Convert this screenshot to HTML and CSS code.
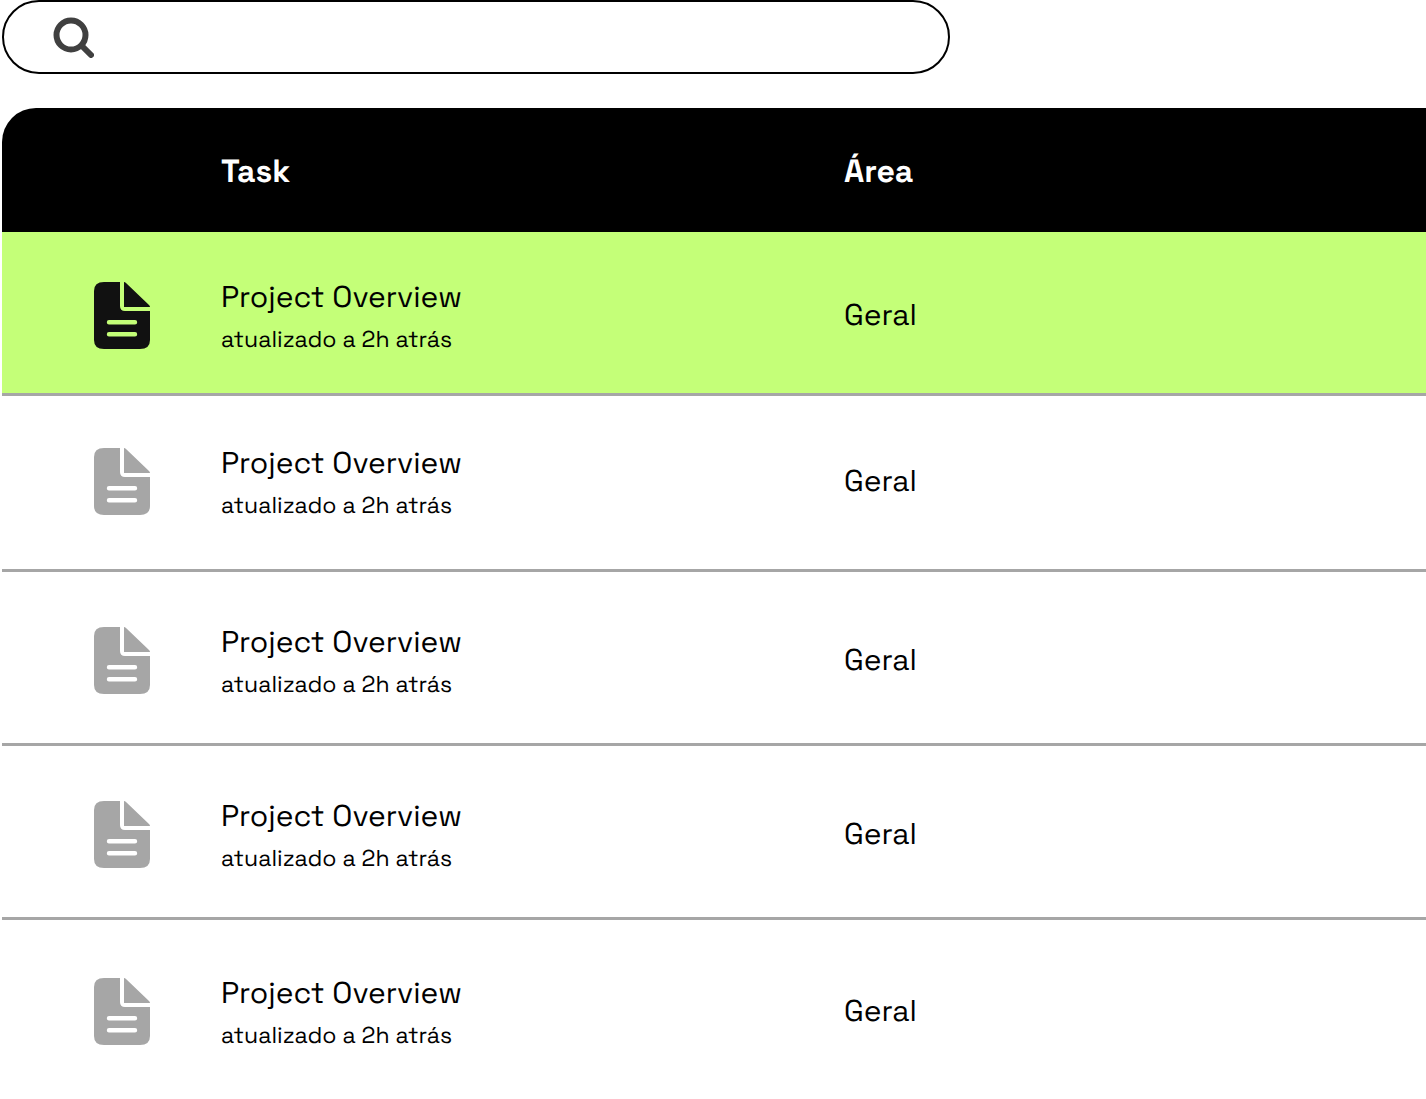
FILE: index.html
```html
<!DOCTYPE html>
<html lang="pt-BR">
<head>
<meta charset="utf-8">
<meta name="viewport" content="width=device-width, initial-scale=1">
<title>Tasks</title>
<link rel="stylesheet" href="styles.css">
</head>
<body>
<svg class="sprite" aria-hidden="true">
  <symbol id="doc" viewBox="0 0 56 68">
    <path fill-rule="evenodd" d="M10 0H26V24Q26 29 31 29H56V58Q56 67 46 67H10Q0 67 0 58V9Q0 0 10 0ZM15 38a2 2 0 0 0 0 4.400H41a2 2 0 0 0 0-4.400ZM15 50a2 2 0 0 0 0 4.400H41a2 2 0 0 0 0-4.400Z"/>
    <path d="M30 0Q31 0 32 1L55 23Q56 24 56 25H30Z"/>
  </symbol>
</svg>
<main class="page">
  <form class="search" role="search">
    <svg class="search-icon" viewBox="0 0 42 42" aria-hidden="true">
      <circle cx="19" cy="19" r="14.500"/>
      <path d="M30 30L39 39"/>
    </svg>
    <input class="search-input" type="search" aria-label="Buscar">
  </form>
  <table class="tasks">
    <colgroup><col class="col-icon"><col class="col-task"><col></colgroup>
    <thead>
      <tr><td></td><th scope="col">Task</th><th scope="col">Área</th></tr>
    </thead>
    <tbody>
      <tr class="selected">
        <td><svg class="doc" aria-hidden="true"><use href="#doc"/></svg></td>
        <td><div class="title">Project Overview</div><div class="updated">atualizado a 2h atrás</div></td>
        <td><div class="area">Geral</div></td>
      </tr>
      <tr>
        <td><svg class="doc" aria-hidden="true"><use href="#doc"/></svg></td>
        <td><div class="title">Project Overview</div><div class="updated">atualizado a 2h atrás</div></td>
        <td><div class="area">Geral</div></td>
      </tr>
      <tr>
        <td><svg class="doc" aria-hidden="true"><use href="#doc"/></svg></td>
        <td><div class="title">Project Overview</div><div class="updated">atualizado a 2h atrás</div></td>
        <td><div class="area">Geral</div></td>
      </tr>
      <tr>
        <td><svg class="doc" aria-hidden="true"><use href="#doc"/></svg></td>
        <td><div class="title">Project Overview</div><div class="updated">atualizado a 2h atrás</div></td>
        <td><div class="area">Geral</div></td>
      </tr>
      <tr>
        <td><svg class="doc" aria-hidden="true"><use href="#doc"/></svg></td>
        <td><div class="title">Project Overview</div><div class="updated">atualizado a 2h atrás</div></td>
        <td><div class="area">Geral</div></td>
      </tr>
    </tbody>
  </table>
</main>
</body>
</html>
```
FILE: styles.css
```css
* { box-sizing: border-box; }
body {
  margin: 0;
  background: #fff;
  color: #000;
  font-family: "Space Grotesk", Inter, sans-serif;
  font-size: 30px;
  text-rendering: geometricPrecision;
}
.sprite { display: none; }
.page {
  display: flex;
  flex-direction: column;
  gap: 34px;
  padding-left: 2px;
}
.search {
  display: flex;
  align-items: center;
  gap: 16px;
  width: 100%;
  max-width: 948px;
  height: 74px;
  padding: 0 36px 0 48px;
  border: 2px solid #000;
  border-radius: 37px;
}
.search-icon {
  flex: none;
  width: 42px;
  height: 42px;
  fill: none;
  stroke: #404040;
  stroke-width: 6;
  stroke-linecap: round;
}
.search-input {
  flex: 1;
  min-width: 0;
  height: 48px;
  border: 0;
  outline: 0;
  background: transparent;
  font: inherit;
}
.tasks {
  width: 100%;
  table-layout: fixed;
  border-spacing: 0;
}
.col-icon { width: 219px; }
.col-task { width: 43.75%; }
.tasks th, .tasks td {
  padding: 0;
  text-align: left;
  vertical-align: middle;
}
thead tr { height: 124px; }
.tasks thead th, .tasks thead td {
  padding-top: 4px;
  background: #000;
  color: #fff;
  font-size: 32px;
  font-weight: 700;
}
thead td:first-child { border-top-left-radius: 34px; }
.tasks tbody td {
  padding: 47px 0 40px;
  border-bottom: 3px solid #a6a6a6;
}
.tasks tbody .selected td {
  padding: 42px 0 35px;
  background: #c4ff78;
}
.tasks tbody tr:nth-child(2) td { padding: 44px 0 45px; }
.tasks tbody tr:last-child td {
  padding: 50px 0 46px;
  border-bottom: 0;
}
.doc {
  display: block;
  width: 56px;
  height: 68px;
  margin-left: 92px;
  fill: #a6a6a6;
}
.selected .doc { fill: #111; }
.title { line-height: 46px; }
.updated {
  font-size: 23px;
  line-height: 38px;
}
.area { padding-bottom: 4px; }
```
